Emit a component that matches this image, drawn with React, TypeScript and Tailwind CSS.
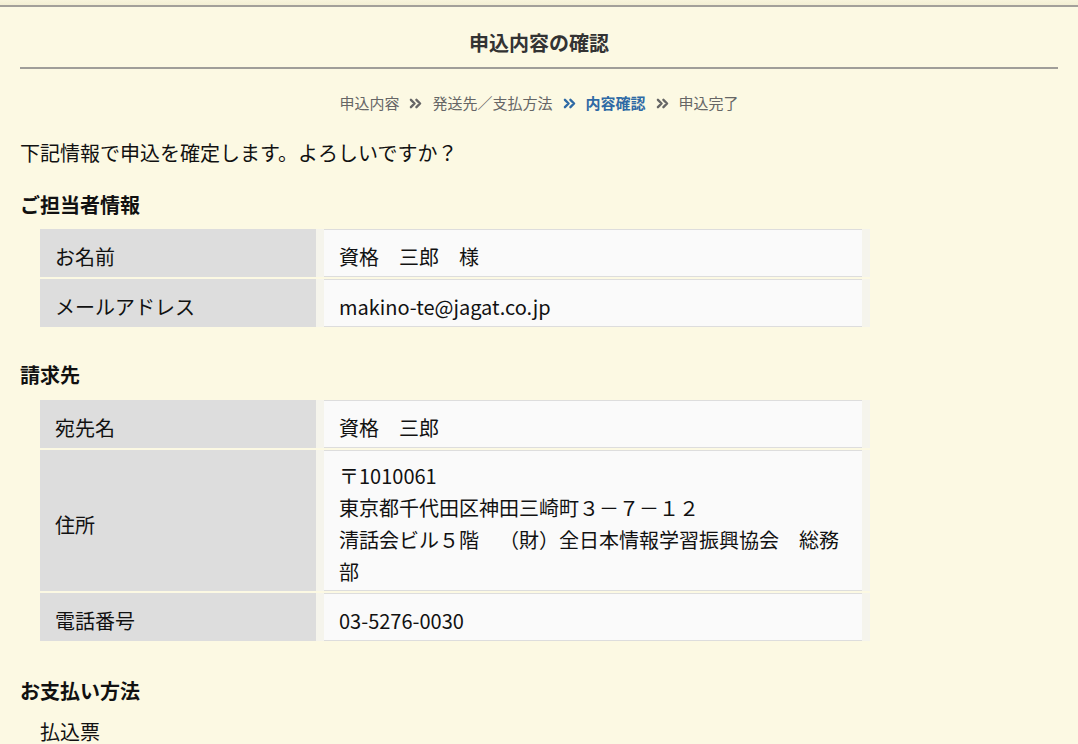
import React from 'react'

const font = { fontFamily: '"Noto Sans CJK JP", "Noto Sans", sans-serif' }

type Row = { label: string; value: React.ReactNode; multi?: boolean }

const Chevron = ({ active }: { active?: boolean }) => (
  <svg
    viewBox="0 0 14 12"
    className={`mx-[10px] w-[13px] h-[11px] ${active ? 'text-[#2f6aa5]' : 'text-[#666]'}`}
    fill="none"
    stroke="currentColor"
    strokeWidth="2.6"
    strokeLinecap="round"
    strokeLinejoin="round"
  >
    <path d="M2 2l4 4-4 4M8 2l4 4-4 4" />
  </svg>
)

const InfoTable = ({ rows }: { rows: Row[] }) => (
  <div className="ml-[40px] w-[830px] flex flex-col gap-[2px]">
    {rows.map((r) => (
      <div key={r.label} className="flex">
        <div className="w-[276px] shrink-0 bg-[#dddddd] px-[15px] pt-[12px] pb-[4px] flex items-center leading-[32px]">
          {r.label}
        </div>
        <div className="flex-1 border-x-8 border-x-[#f5f4ec]">
          <div
            className={`h-full bg-[#fafafa] border-y border-[#dddddd] px-[15px] leading-[32px] ${
              r.multi ? 'pt-[9px] pb-[2px]' : 'pt-[11px] pb-[3px]'
            }`}
          >
            {r.value}
          </div>
        </div>
      </div>
    ))}
  </div>
)

export default function App() {
  return (
    <div className="min-h-[744px] bg-[#fcf9e3] text-[#111] text-[20px] [text-spacing-trim:space-all]" style={font}>
      <div className="h-[7px] bg-gradient-to-b from-[#f8f4dc] to-[#f3efd4] border-b-2 border-[#a3a09a]" />
      <div className="px-[20px]">
        <h1 className="h-[62px] flex items-center justify-center pt-[12px] text-[20px] font-bold text-[#333] border-b-2 border-[#a09e99]">
          申込内容の確認
        </h1>
        <div className="mt-[23px] flex items-center justify-center text-[15px] text-[#666] leading-[22px]">
          <span>申込内容</span>
          <Chevron />
          <span>発送先／支払方法</span>
          <Chevron active />
          <span className="font-bold text-[#2f6aa5]">内容確認</span>
          <Chevron />
          <span>申込完了</span>
        </div>
        <p className="mt-[23px] leading-[32px]">下記情報で申込を確定します。よろしいですか？</p>
        <h2 className="mt-[20px] font-bold leading-[32px]">ご担当者情報</h2>
      </div>
      <div className="mt-[8px]">
        <InfoTable
          rows={[
            { label: 'お名前', value: '資格　三郎　様' },
            { label: 'メールアドレス', value: 'makino-te@jagat.co.jp' },
          ]}
        />
      </div>
      <h2 className="mt-[32px] px-[20px] font-bold leading-[32px]">請求先</h2>
      <div className="mt-[9px]">
        <InfoTable
          rows={[
            { label: '宛先名', value: '資格　三郎' },
            {
              label: '住所',
              multi: true,
              value: (
                <>
                  <div>〒1010061</div>
                  <div>東京都千代田区神田三崎町３－７－１２</div>
                  <div>清話会ビル５階　（財）全日本情報学習振興協会　総務部</div>
                </>
              ),
            },
            { label: '電話番号', value: '03-5276-0030' },
          ]}
        />
      </div>
      <h2 className="mt-[34px] px-[20px] font-bold leading-[32px]">お支払い方法</h2>
      <p className="mt-[9px] px-[40px] leading-[32px]">払込票</p>
    </div>
  )
}
